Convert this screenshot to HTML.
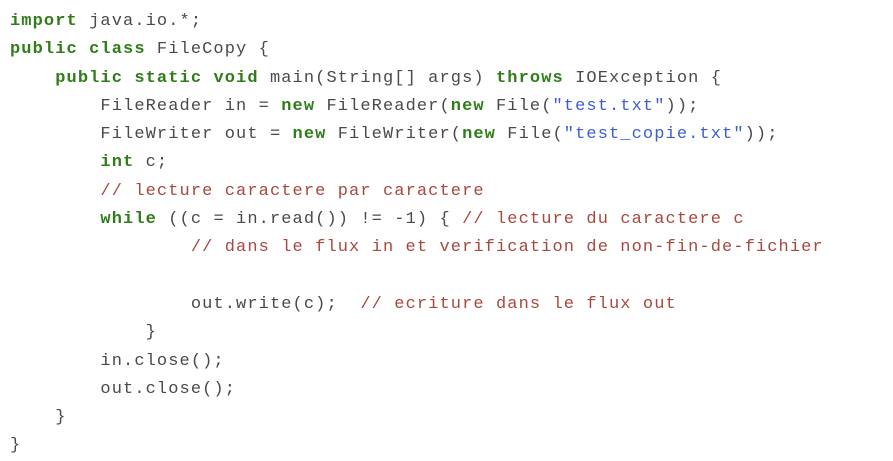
<!DOCTYPE html>
<html><head><style>
html,body{margin:0;padding:0;background:#fff;width:893px;height:459px;overflow:hidden}
pre{margin:0;position:absolute;left:10px;top:8px;font-family:"Liberation Mono",monospace;font-size:17px;letter-spacing:1.1px;line-height:28.3px;color:#4a4a4a}
.k{color:#2f7d1a;font-weight:bold}
.s{color:#3c5fd0}
.c{color:#a8483e}
</style></head><body>
<pre><span class="k">import</span> java.io.*;
<span class="k">public class</span> FileCopy {
    <span class="k">public static void</span> main(String[] args) <span class="k">throws</span> IOException {
        FileReader in = <span class="k">new</span> FileReader(<span class="k">new</span> File(<span class="s">"test.txt"</span>));
        FileWriter out = <span class="k">new</span> FileWriter(<span class="k">new</span> File(<span class="s">"test_copie.txt"</span>));
        <span class="k">int</span> c;
        <span class="c">// lecture caractere par caractere</span>
        <span class="k">while</span> ((c = in.read()) != -1) { <span class="c">// lecture du caractere c</span>
                <span class="c">// dans le flux in et verification de non-fin-de-fichier</span>

                out.write(c);  <span class="c">// ecriture dans le flux out</span>
            }
        in.close();
        out.close();
    }
}</pre>
</body></html>
